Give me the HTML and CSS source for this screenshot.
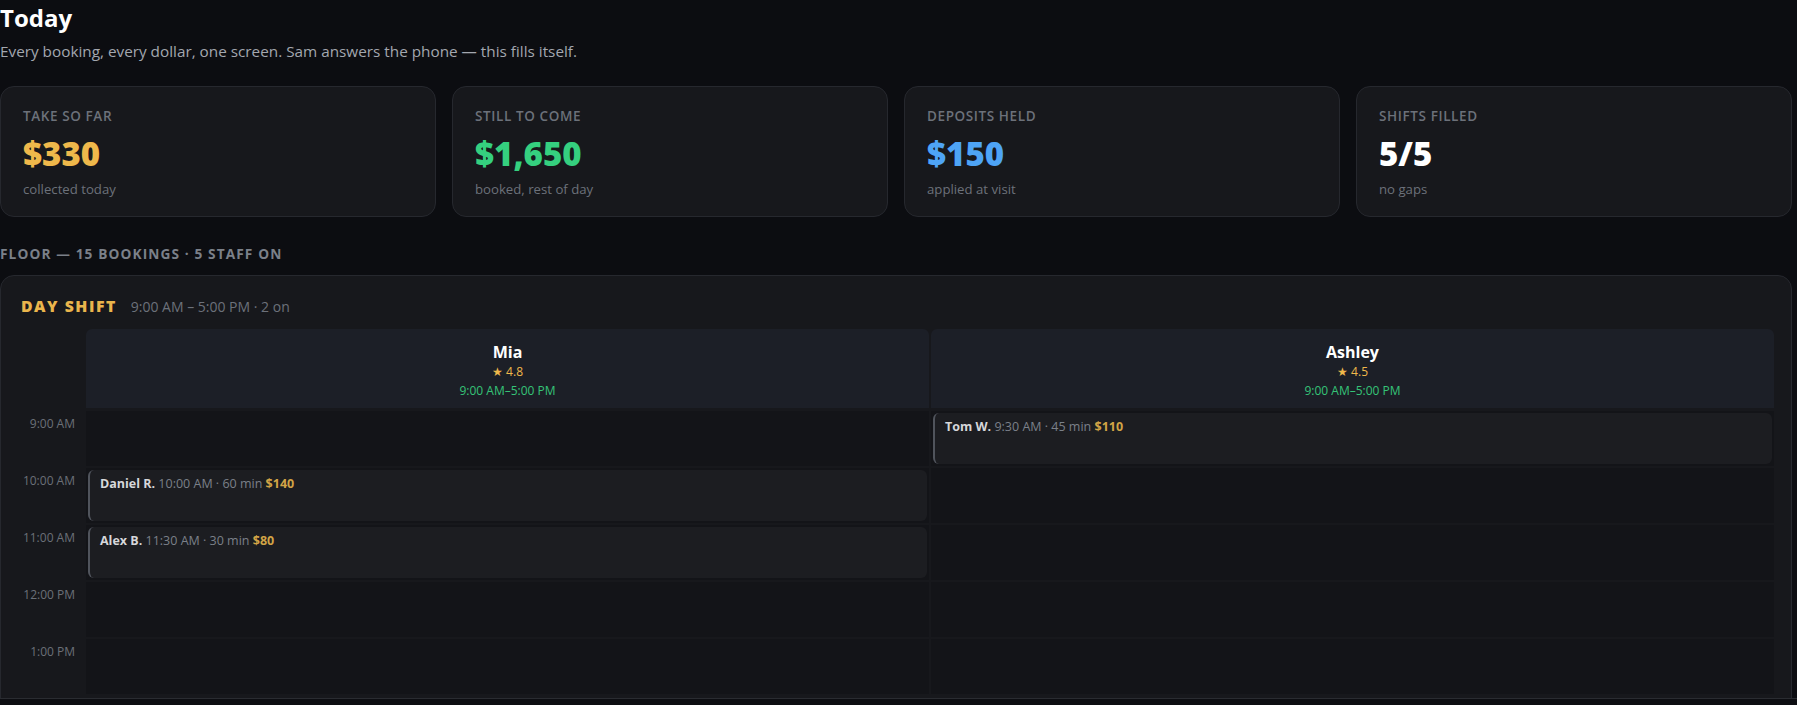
FILE: index.html
```html
<!DOCTYPE html>
<html lang="en">
<head>
<meta charset="UTF-8">
<meta name="viewport" content="width=device-width, initial-scale=1.0">
<title>Today</title>
<link rel="stylesheet" href="styles.css">
</head>
<body>
	<div class="page">
		<header class="page-head">
			<h1>Today</h1>
			<p>Every booking, every dollar, one screen. Sam answers the phone — this fills itself.</p>
		</header>

		<section class="stats">
			<div class="stat">
				<div class="stat-label">Take so far</div>
				<div class="stat-value gold">$330</div>
				<div class="stat-note">collected today</div>
			</div>
			<div class="stat">
				<div class="stat-label">Still to come</div>
				<div class="stat-value green">$1,650</div>
				<div class="stat-note">booked, rest of day</div>
			</div>
			<div class="stat">
				<div class="stat-label">Deposits held</div>
				<div class="stat-value blue">$150</div>
				<div class="stat-note">applied at visit</div>
			</div>
			<div class="stat">
				<div class="stat-label">Shifts filled</div>
				<div class="stat-value">5/5</div>
				<div class="stat-note">no gaps</div>
			</div>
		</section>

		<h2 class="section-label">Floor — 15 bookings · 5 staff on</h2>

		<section class="shift">
			<div class="shift-head">
				<span class="shift-name">Day shift</span>
				<span class="shift-hours">9:00 AM – 5:00 PM · 2 on</span>
			</div>

			<div class="roster">
				<div class="corner"></div>
				<div class="staff">
					<div class="staff-name">Mia</div>
					<div class="staff-rating">★ 4.8</div>
					<div class="staff-hours">9:00 AM–5:00 PM</div>
				</div>
				<div class="staff">
					<div class="staff-name">Ashley</div>
					<div class="staff-rating">★ 4.5</div>
					<div class="staff-hours">9:00 AM–5:00 PM</div>
				</div>

				<div class="hour">9:00 AM</div>
				<div class="slot"></div>
				<div class="slot">
					<div class="booking"><b>Tom W.</b> <span>9:30 AM · 45 min</span> <em>$110</em></div>
				</div>

				<div class="hour">10:00 AM</div>
				<div class="slot">
					<div class="booking"><b>Daniel R.</b> <span>10:00 AM · 60 min</span> <em>$140</em></div>
				</div>
				<div class="slot"></div>

				<div class="hour">11:00 AM</div>
				<div class="slot">
					<div class="booking"><b>Alex B.</b> <span>11:30 AM · 30 min</span> <em>$80</em></div>
				</div>
				<div class="slot"></div>

				<div class="hour">12:00 PM</div>
				<div class="slot"></div>
				<div class="slot"></div>

				<div class="hour">1:00 PM</div>
				<div class="slot"></div>
				<div class="slot"></div>
			</div>
		</section>
	</div>

	<div class="scroll-edge"></div>
</body>
</html>
```

FILE: styles.css
```css
body {
	font-family: 'Open Sans', 'Noto Sans', sans-serif;
	margin: 0;
	padding: 0;
	height: 100vh;
	display: flex;
	flex-direction: column;
	background-color: #0c0d11;
	color: #e6e7ea;
}

.page {
	flex: 1;
	overflow: hidden;
	padding-right: 5px;
}

.scroll-edge {
	height: 6px;
	border-top: 1px solid #2a2c31;
	background-color: #0d0e12;
}

.page-head h1 {
	margin: 0;
	padding-top: 2px;
	font-size: 24px;
	line-height: 32px;
	font-weight: 700;
	color: #ffffff;
}

.page-head p {
	margin: 7px 0 0;
	font-size: 15.3px;
	line-height: 20px;
	color: #a3a7af;
}

.stats {
	display: grid;
	grid-template-columns: repeat(4, 1fr);
	gap: 16px;
	margin-top: 25px;
}

.stat {
	background-color: #17181c;
	border: 1px solid #26282e;
	border-radius: 14px;
	padding: 20px 22px 0;
	height: 131px;
	box-sizing: border-box;
}

.stat-label {
	font-size: 13.5px;
	line-height: 18px;
	font-weight: 600;
	letter-spacing: 0.6px;
	text-transform: uppercase;
	color: #6c717a;
}

.stat-value {
	margin-top: 9px;
	font-size: 33px;
	line-height: 40px;
	font-weight: 800;
	color: #ffffff;
}

.gold { color: #efb84b; }
.green { color: #35d07f; }
.blue { color: #4ea4f6; }

.stat-note {
	margin-top: 6px;
	font-size: 13.2px;
	line-height: 18px;
	color: #6c717a;
}

.section-label {
	margin: 28px 0 12px;
	font-size: 13.7px;
	line-height: 18px;
	font-weight: 700;
	letter-spacing: 1.1px;
	text-transform: uppercase;
	color: #7b8089;
}

.shift {
	background-color: #17181c;
	border: 1px solid #26282e;
	border-radius: 14px;
	padding: 0 17px 18px 18px;
}

.shift-head {
	display: flex;
	align-items: baseline;
	gap: 14px;
	padding: 20px 0 12px 2px;
	line-height: 20px;
}

.shift-name {
	font-size: 15.8px;
	font-weight: 800;
	letter-spacing: 1.5px;
	text-transform: uppercase;
	color: #eab54c;
}

.shift-hours {
	font-size: 14px;
	color: #6c717a;
}

.roster {
	display: grid;
	grid-template-columns: 65px 1fr 1fr;
	grid-template-rows: 80px;
	grid-auto-rows: 55px;
	column-gap: 2px;
	row-gap: 2px;
}

.corner {
	margin-bottom: 1px;
}

.staff {
	background-color: #1c1f27;
	border-radius: 6px 6px 0 0;
	text-align: center;
	padding-top: 13px;
	margin-bottom: 1px;
}

.staff-name {
	font-size: 16px;
	font-weight: 700;
	color: #ffffff;
	line-height: 20px;
}

.staff-rating {
	font-size: 12px;
	color: #efb84b;
	line-height: 19px;
}

.staff-hours {
	font-size: 12px;
	color: #35c377;
	line-height: 19px;
}

.hour {
	text-align: right;
	padding: 5px 9px 0 0;
	font-size: 12px;
	line-height: 16px;
	color: #6b7078;
	white-space: nowrap;
}

.slot {
	background-color: #131418;
	padding: 2px;
}

.booking {
	height: 100%;
	box-sizing: border-box;
	background-color: #1c1d21;
	border-left: 2px solid #50545c;
	border-radius: 6px;
	padding: 5px 10px;
	font-size: 12.5px;
	line-height: 18px;
	color: #7b8089;
}

.booking b {
	color: #d6d7da;
	font-weight: 700;
}

.booking em {
	font-style: normal;
	font-weight: 700;
	color: #d2a446;
}
```
